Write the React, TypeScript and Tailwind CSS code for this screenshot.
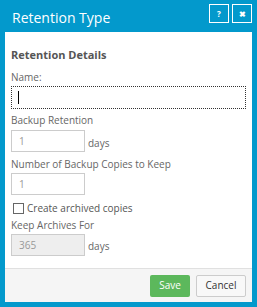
import React from "react";

const font = { fontFamily: '"Open Sans", "Liberation Sans", sans-serif' };

function Label({ children }: { children: React.ReactNode }) {
  return <div className="text-[10px] leading-[14px] text-[#666]">{children}</div>;
}

export default function App() {
  return (
    <div
      className="w-[257px] h-[307px] bg-[#0399cc] px-[5px] pb-[5px] flex flex-col"
      style={font}
    >
      {/* Header */}
      <div className="h-[32px] flex items-start justify-between">
        <div className="pl-[7px] pt-[8px] text-[14px] leading-[20px] text-white">Retention Type</div>
        <div className="flex gap-[3px] pt-[4px]">
          <button className="w-[20px] h-[19px] border-[1.5px] border-white flex items-center justify-center text-white text-[8px] font-bold leading-none">
            ?
          </button>
          <button className="w-[20px] h-[19px] border-[1.5px] border-white flex items-center justify-center text-white text-[8px] font-bold leading-none">
            ✖
          </button>
        </div>
      </div>

      {/* Body */}
      <div className="flex-1 bg-white flex flex-col">
        <div className="flex-1 px-[6px] pt-[16px]">
          <div className="text-[11px] leading-[14px] font-bold text-[#555]">Retention Details</div>

          <div className="mt-[8px]">
            <Label>Name:</Label>
            <div className="mt-[2px] h-[23px] border border-dotted border-[#333] flex items-center pl-[6px]">
              <div className="w-px h-[13px] bg-black" />
            </div>
          </div>

          <div className="mt-[4px]">
            <Label>Backup Retention</Label>
            <div className="mt-[3px] flex items-center gap-[3px]">
              <div className="w-[74px] h-[22px] border border-[#ccc] text-[10px] text-[#999] pl-[7px] flex items-center">1</div>
              <span className="text-[10px] text-[#666] leading-[14px] mt-[3px]">days</span>
            </div>
          </div>

          <div className="mt-[5px]">
            <Label>Number of Backup Copies to Keep</Label>
            <div className="mt-[2px] w-[74px] h-[22px] border border-[#ccc] text-[10px] text-[#999] pl-[7px] flex items-center">1</div>
          </div>

          <label className="mt-[6px] h-[14px] flex items-center gap-[3px] pl-[2px]">
            <span className="w-[11px] h-[11px] border border-[#666] bg-white" />
            <span className="text-[10px] leading-[14px] text-[#555]">Create archived copies</span>
          </label>

          <div className="mt-[3px]">
            <Label>Keep Archives For</Label>
            <div className="mt-[2px] flex items-center gap-[3px]">
              <div className="w-[74px] h-[22px] border border-[#ccc] bg-[#eee] text-[10px] text-[#999] pl-[7px] flex items-center">365</div>
              <span className="text-[10px] text-[#666] leading-[14px] mt-[2px]">days</span>
            </div>
          </div>
        </div>

        {/* Footer */}
        <div className="h-[34px] border-t border-[#e0e0e0] bg-[#f5f5f5] flex items-center justify-end gap-[6px] pr-[6px]">
          <button className="w-[40px] h-[22px] rounded-[2px] bg-[#5cb85c] text-white text-[10px]">Save</button>
          <button className="w-[50px] h-[22px] rounded-[2px] border border-[#ccc] bg-[#f8f8f8] text-[#333] text-[10px]">Cancel</button>
        </div>
      </div>
    </div>
  );
}
